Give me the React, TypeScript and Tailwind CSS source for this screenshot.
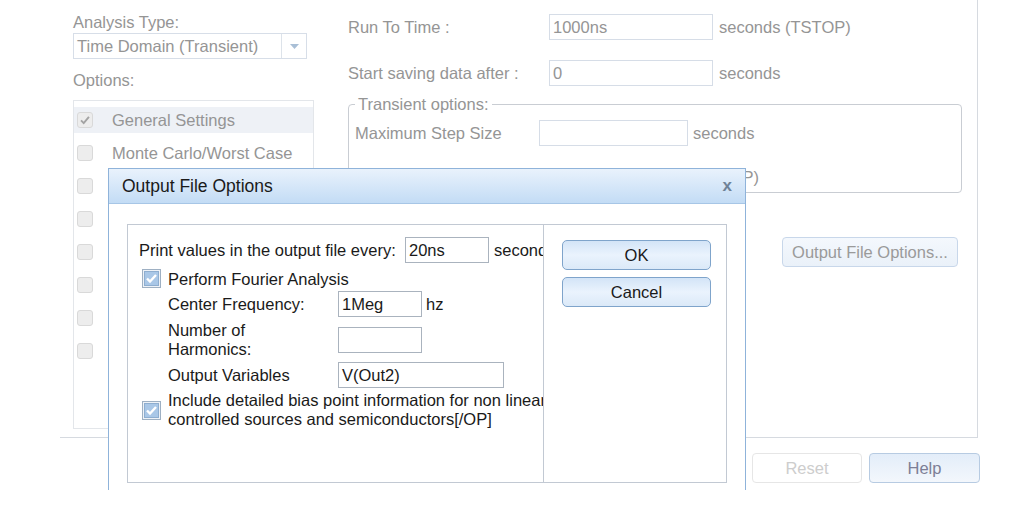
import React from 'react';

const faded = 'text-[#959595]';

function BgCheck({ checked }: { checked?: boolean }) {
  return (
    <span className="w-4 h-4 shrink-0 rounded-[3px] border border-[#d9d9d9] bg-[#ededed] flex items-center justify-center">
      {checked && (
        <svg viewBox="0 0 16 16" className="w-3.5 h-3.5">
          <path d="M3.5 8.5l3 3 6-7" fill="none" stroke="#a3a3a3" strokeWidth="2.2" />
        </svg>
      )}
    </span>
  );
}

function DlgCheck() {
  return (
    <svg width="19" height="19" viewBox="0 0 19 19" className="shrink-0">
      <rect x="0.5" y="0.5" width="18" height="18" fill="#eef2f7" stroke="#9eb0c3" />
      <rect x="2.5" y="2.5" width="14" height="14" fill="#a9c7e7" stroke="#8eaed0" />
      <path d="M5 9.5l3 3 6-6.5" fill="none" stroke="#ffffff" strokeWidth="2.4" />
    </svg>
  );
}

function BgInput({ value, w }: { value?: string; w: string }) {
  return (
    <div className={`${w} h-[26px] shrink-0 border border-[#d6dde7] bg-white flex items-center pl-[3px] ${faded}`}>
      {value}
    </div>
  );
}

function DlgInput({ value, w }: { value?: string; w: string }) {
  return (
    <div className={`${w} h-[26px] shrink-0 border border-[#aab3be] bg-white flex items-center pl-[3px] text-[#1a1a1a]`}>
      {value}
    </div>
  );
}

function DlgButton({ label }: { label: string }) {
  return (
    <button className="w-[149px] h-[30px] rounded-[5px] border border-[#7fa4cb] bg-gradient-to-b from-[#d3e4f7] via-[#eaf3fd] to-[#dbe9f8] text-[#1a1a1a] flex items-center justify-center">
      {label}
    </button>
  );
}

const listItems = [
  'General Settings',
  'Monte Carlo/Worst Case',
  'Parametric Sweep',
  'Temperature (Sweep)',
  'Save Bias Point',
  'Load Bias Point',
  'Save Check Points',
  'Restart Simulation',
];

export default function App() {
  return (
    <div className="w-[1010px] h-[524px] bg-white relative overflow-hidden font-['Liberation_Sans',Arial,sans-serif] text-[16.5px] leading-[18px]">
      {/* background simulation settings window (faded) */}
      <div className="ml-[60px] w-[918px] h-[438px] border-r border-b border-[#d6dae0] flex">
        <div className="ml-[13px] w-[241px] pt-[13px] flex flex-col">
          <div className={`h-[18px] ${faded}`}>Analysis Type:</div>
          <div className="mt-[2px] w-[234px] h-[26px] border border-[#d7dee8] flex">
            <div className={`flex-1 flex items-center pl-[3px] ${faded}`}>Time Domain (Transient)</div>
            <div className="w-[25px] border-l border-[#dde3ea] flex items-center justify-center">
              <svg width="9" height="5" viewBox="0 0 9 5">
                <path d="M0 0h9L4.5 5z" fill="#a9bfd6" />
              </svg>
            </div>
          </div>
          <div className={`mt-[12px] h-[18px] ${faded}`}>Options:</div>
          <div className="mt-[11px] h-[329px] border border-[#e3e6ea] pt-[6px] flex flex-col gap-[7px]">
            {listItems.map((item, i) => (
              <div
                key={item}
                className={`h-[26px] flex items-center pl-[3px] gap-[19px] ${faded} ${i === 0 ? 'bg-[#eef1f6]' : ''}`}
              >
                <BgCheck checked={i === 0} />
                <span className="whitespace-nowrap">{item}</span>
              </div>
            ))}
          </div>
        </div>

        <div className="ml-[34px] w-[614px] pt-[14px] flex flex-col">
          <div className="flex items-center h-[26px]">
            <span className={`w-[201px] ${faded}`}>Run To Time :</span>
            <BgInput w="w-[164px]" value="1000ns" />
            <span className={`ml-[6px] ${faded}`}>seconds (TSTOP)</span>
          </div>
          <div className="mt-[20px] flex items-center h-[26px]">
            <span className={`w-[201px] ${faded}`}>Start saving data after :</span>
            <BgInput w="w-[164px]" value="0" />
            <span className={`ml-[6px] ${faded}`}>seconds</span>
          </div>
          <fieldset className="mt-[9px] border border-[#c9cdd3] rounded-[4px] px-[6px] pb-[2px]">
            <legend className={`px-[3px] leading-[18px] ${faded}`}>Transient options:</legend>
            <div className="mt-[7px] flex items-center h-[26px]">
              <span className={`w-[184px] ${faded}`}>Maximum Step Size</span>
              <BgInput w="w-[149px]" />
              <span className={`ml-[5px] ${faded}`}>seconds</span>
            </div>
            <div className="mt-[18px] flex items-center h-[26px] gap-[13px]">
              <BgCheck />
              <span className={`whitespace-nowrap ${faded}`}>Skip initial transient bias point calculation (SKIPBP)</span>
            </div>
          </fieldset>
          <button className="mt-[44px] self-end mr-[4px] w-[176px] h-[30px] rounded-[4px] border border-[#c8d7ea] bg-gradient-to-b from-[#f4f8fd] to-[#eaf1f9] text-[#9a9a9a] flex items-center justify-center">
            Output File Options...
          </button>
        </div>
      </div>

      <div className="mt-[15px] pr-[30px] flex justify-end gap-[7px]">
        <button className="w-[110px] h-[30px] rounded-[4px] border border-[#e6e6e6] bg-white text-[#cdcdcd] flex items-center justify-center">
          Reset
        </button>
        <button className="w-[111px] h-[30px] rounded-[4px] border border-[#b7cbe2] bg-gradient-to-b from-[#e3edf9] to-[#f3f7fc] text-[#7d7f96] flex items-center justify-center">
          Help
        </button>
      </div>

      {/* Output File Options dialog */}
      <div className="absolute left-[108px] top-[168px] w-[638px] h-[322px] bg-white border-x border-t border-[#8fb3da] flex flex-col">
        <div className="h-[35px] shrink-0 bg-gradient-to-b from-[#e9f2fc] to-[#c3dcf5] border-b border-[#a7c6e6] flex items-center pl-[13px] pr-[13px]">
          <span className="flex-1 text-[17.5px] text-[#1a1a1a]">Output File Options</span>
          <span className="text-[17px] font-bold text-[#6f8297]">x</span>
        </div>
        <div className="ml-[18px] mt-[20px] w-[600px] h-[259px] border border-[#c2c9d3] flex">
          <div className="w-[415px] shrink-0 overflow-hidden pl-[11px] pt-[12px] text-[#1a1a1a]">
            <div className="flex items-center h-[26px] whitespace-nowrap">
              <span className="w-[266px] shrink-0">Print values in the output file every:</span>
              <DlgInput w="w-[84px]" value="20ns" />
              <span className="ml-[5px] shrink-0">seconds</span>
            </div>
            <div className="mt-[6px] ml-[3px] flex items-center gap-[7px] h-[19px]">
              <DlgCheck />
              <span>Perform Fourier Analysis</span>
            </div>
            <div className="ml-[29px]">
              <div className="mt-[3px] flex items-center h-[26px]">
                <span className="w-[170px] shrink-0">Center Frequency:</span>
                <DlgInput w="w-[84px]" value="1Meg" />
                <span className="ml-[4px]">hz</span>
              </div>
              <div className="mt-[4px] flex items-center h-[38px]">
                <span className="w-[170px] shrink-0 leading-[19px]">
                  Number of
                  <br />
                  Harmonics:
                </span>
                <DlgInput w="w-[84px]" />
              </div>
              <div className="mt-[3px] flex items-center h-[26px]">
                <span className="w-[170px] shrink-0">Output Variables</span>
                <DlgInput w="w-[166px]" value="V(Out2)" />
              </div>
            </div>
            <div className="mt-[3px] ml-[3px] flex items-center gap-[7px] whitespace-nowrap">
              <DlgCheck />
              <span className="leading-[19px]">
                Include detailed bias point information for non linear
                <br />
                controlled sources and semiconductors[/OP]
              </span>
            </div>
          </div>
          <div className="flex-1 border-l border-[#c2c9d3] pl-[18px] pt-[15px] flex flex-col gap-[7px]">
            <DlgButton label="OK" />
            <DlgButton label="Cancel" />
          </div>
        </div>
      </div>
    </div>
  );
}
